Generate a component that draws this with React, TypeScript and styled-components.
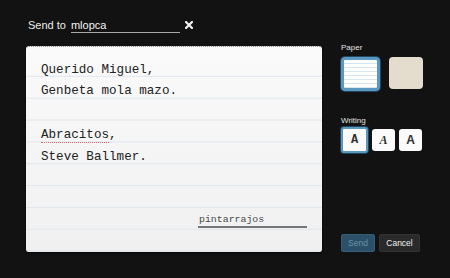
import styled, { createGlobalStyle } from "styled-components";

const GlobalStyle = createGlobalStyle`
  html, body {
    margin: 0;
    padding: 0;
    background: #121212;
  }
  * {
    box-sizing: border-box;
  }
`;

const LINE = 21.85;

export default function App() {
  return (
    <>
      <GlobalStyle />
      <Page>
        <LeftColumn>
          <Header>
            <SendLabel>Send to</SendLabel>
            <Recipient>mlopca</Recipient>
            <CloseButton aria-label="close">
              <svg width="8" height="8" viewBox="0 0 8 8">
                <path
                  d="M1 1 L7 7 M7 1 L1 7"
                  stroke="#f2f2f2"
                  strokeWidth="2.2"
                  strokeLinecap="square"
                />
              </svg>
            </CloseButton>
          </Header>
          <Paper>
            <Letter>
              <TextLine>Querido Miguel,</TextLine>
              <TextLine>Genbeta mola mazo.</TextLine>
              <TextLine>&nbsp;</TextLine>
              <TextLine>
                <Misspelled>Abracitos</Misspelled>,
              </TextLine>
              <TextLine>Steve Ballmer.</TextLine>
              <Signature>pintarrajos</Signature>
            </Letter>
          </Paper>
        </LeftColumn>

        <RightColumn>
          <Label>Paper</Label>
          <SwatchRow>
            <PaperSwatch $selected $kind="lined" />
            <PaperSwatch $kind="kraft" />
          </SwatchRow>

          <Label $top={25}>Writing</Label>
          <FontRow>
            <FontButton $selected $font="'Liberation Mono', monospace">
              A
            </FontButton>
            <FontButton $font="'Liberation Serif', serif" $italic>
              A
            </FontButton>
            <FontButton $font="'Liberation Sans', sans-serif">A</FontButton>
          </FontRow>

          <Actions>
            <ActionButton $primary>Send</ActionButton>
            <ActionButton>Cancel</ActionButton>
          </Actions>
        </RightColumn>
      </Page>
    </>
  );
}

const Page = styled.div`
  display: flex;
  width: 450px;
  height: 278px;
  background: #121212;
  font-family: "Liberation Sans", Arial, sans-serif;
  overflow: hidden;
`;

const LeftColumn = styled.div`
  display: flex;
  flex-direction: column;
  width: 296px;
  margin-left: 26px;
`;

const Header = styled.div`
  display: flex;
  align-items: flex-start;
  height: 46px;
  padding: 18px 0 0 2px;
  color: #ededed;
  font-size: 11px;
  line-height: 14px;
`;

const SendLabel = styled.span`
  margin-right: 5px;
`;

const Recipient = styled.span`
  width: 109px;
  border-bottom: 1px solid #a8a8a8;
  color: #f4f4f4;
`;

const CloseButton = styled.span`
  display: flex;
  margin: 3px 0 0 5px;
`;

const Paper = styled.div`
  display: flex;
  flex-direction: column;
  height: 206px;
  border-radius: 3px;
  border-top: 1px dotted #9a9a9a;
  background: linear-gradient(to bottom, #fafafa 0%, #f0f0f0 100%);
  box-shadow: 0 1px 2px rgba(0, 0, 0, 0.7);
  overflow: hidden;
`;

const Letter = styled.div`
  flex: 1;
  display: flex;
  flex-direction: column;
  margin-top: 8.15px;
  padding: 4.5px 15px 0 15px;
  background-image: linear-gradient(
    to bottom,
    transparent 0,
    transparent ${LINE - 1}px,
    #dfe6ec ${LINE - 1}px,
    #dfe6ec ${LINE}px
  );
  background-size: 100% ${LINE}px;
  font-family: "Liberation Mono", "Courier New", monospace;
  font-size: 12.6px;
  color: #222;
`;

const TextLine = styled.div`
  line-height: ${LINE - 0.4}px;
  height: ${LINE}px;
  white-space: pre;
`;

const Misspelled = styled.span`
  border-bottom: 1px dotted #e06a6a;
`;

const Signature = styled.div`
  margin: auto 0 24px auto;
  width: 109px;
  padding-left: 1px;
  border-bottom: 2px solid #777;
  font-size: 9.9px;
  line-height: 12px;
  color: #4a4a4a;
`;

const RightColumn = styled.div`
  display: flex;
  flex-direction: column;
  margin-left: 19px;
  padding-top: 43px;
  height: 278px;
`;

const Label = styled.div<{ $top?: number }>`
  margin-top: ${(p) => p.$top ?? 0}px;
  font-size: 8px;
  line-height: 10px;
  color: #e2e2e2;
`;

const SwatchRow = styled.div`
  display: flex;
  align-items: flex-start;
  gap: 9px;
  margin-top: 4px;
`;

const PaperSwatch = styled.div<{ $selected?: boolean; $kind: "lined" | "kraft" }>`
  width: ${(p) => (p.$selected ? 39 : 34)}px;
  height: ${(p) => (p.$selected ? 34 : 32)}px;
  border-radius: 4px;
  border: ${(p) => (p.$selected ? "3px solid #5a98bf" : "none")};
  box-shadow: ${(p) => (p.$selected ? "0 0 0 1px #1f4560" : "none")};
  background: ${(p) =>
    p.$kind === "lined"
      ? "repeating-linear-gradient(to bottom, #ffffff 0 3px, #d6e6ef 3px 4px)"
      : "#e4ddcd"};
`;

const FontRow = styled.div`
  display: flex;
  align-items: center;
  gap: 4px;
  margin-top: 1px;
`;

const FontButton = styled.div<{ $selected?: boolean; $font: string; $italic?: boolean }>`
  display: flex;
  align-items: center;
  justify-content: center;
  width: ${(p) => (p.$selected ? 27 : 23)}px;
  height: ${(p) => (p.$selected ? 26 : 22)}px;
  border-radius: 3px;
  border: ${(p) => (p.$selected ? "2px solid #5a98bf" : "none")};
  box-shadow: ${(p) => (p.$selected ? "0 0 0 1px #1f4560" : "none")};
  background: #fbfbfb;
  font-family: ${(p) => p.$font};
  font-style: ${(p) => (p.$italic ? "italic" : "normal")};
  font-weight: bold;
  font-size: 12px;
  color: #2e2e2e;
`;

const Actions = styled.div`
  display: flex;
  gap: 4px;
  margin-top: auto;
  margin-bottom: 26px;
`;

const ActionButton = styled.div<{ $primary?: boolean }>`
  display: flex;
  align-items: center;
  justify-content: center;
  height: 18px;
  width: ${(p) => (p.$primary ? 34 : 41)}px;
  border-radius: 2px;
  background: ${(p) => (p.$primary ? "#2b5068" : "#2a2a2a")};
  border: 1px solid ${(p) => (p.$primary ? "#335d78" : "#333")};
  color: ${(p) => (p.$primary ? "#6a91a8" : "#f2f2f2")};
  font-size: 8.5px;
`;
